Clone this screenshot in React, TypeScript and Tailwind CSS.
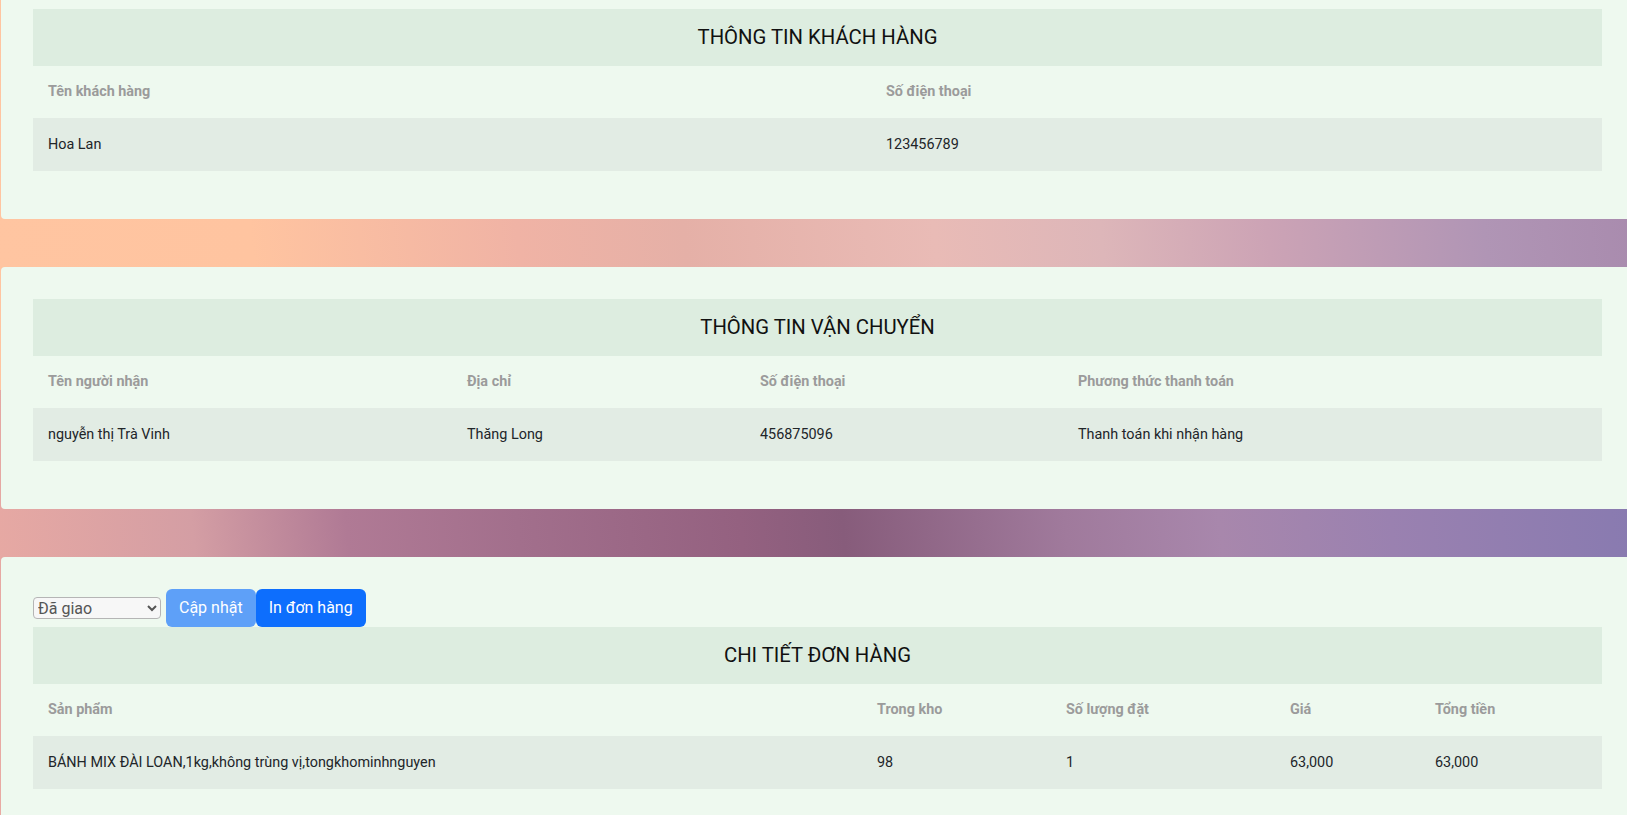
import React from 'react'

type Col = { label: string; w: string }

const customerCols: Col[] = [
    { label: 'Tên khách hàng', w: 'w-[838px]' },
    { label: 'Số điện thoại', w: 'w-[731px]' },
]

const shippingCols: Col[] = [
    { label: 'Tên người nhận', w: 'w-[419px]' },
    { label: 'Địa chỉ', w: 'w-[293px]' },
    { label: 'Số điện thoại', w: 'w-[318px]' },
    { label: 'Phương thức thanh toán', w: 'w-[539px]' },
]

const orderCols: Col[] = [
    { label: 'Sản phẩm', w: 'w-[829px]' },
    { label: 'Trong kho', w: 'w-[189px]' },
    { label: 'Số lượng đặt', w: 'w-[224px]' },
    { label: 'Giá', w: 'w-[145px]' },
    { label: 'Tổng tiền', w: 'w-[182px]' },
]

function InfoTable({ title, cols, row }: { title: string; cols: Col[]; row: string[] }) {
    return (
        <table className="w-full table-fixed border-collapse mb-4">
            <colgroup>
                {cols.map((c) => (
                    <col key={c.label} className={c.w} />
                ))}
            </colgroup>
            <thead>
                <tr>
                    <th
                        colSpan={cols.length}
                        className="h-[57px] pb-px bg-[#ddede0] text-center text-[20.3px] font-normal text-[#111]"
                    >
                        {title}
                    </th>
                </tr>
                <tr>
                    {cols.map((c) => (
                        <th
                            key={c.label}
                            className="h-[52px] px-[15px] text-left text-[14.4px] font-bold text-[#9b9b9b]"
                        >
                            {c.label}
                        </th>
                    ))}
                </tr>
            </thead>
            <tbody>
                <tr className="bg-[#e2ece4]">
                    {row.map((v, i) => (
                        <td key={i} className="h-[53px] px-[15px] text-[14.4px] text-[#212529]">
                            {v}
                        </td>
                    ))}
                </tr>
            </tbody>
        </table>
    )
}

function Card({ children }: { children: React.ReactNode }) {
    return (
        <section className="w-[1633px] shrink-0 rounded bg-[#eef9ef] px-8 pt-8 pb-8">
            {children}
        </section>
    )
}

export default function App() {
    return (
        <div className="h-screen overflow-hidden font-['Roboto',sans-serif] bg-no-repeat bg-[linear-gradient(84deg,#ffc5a1_0%,#ffc4a0_16%,#f0b3a5_32%,#e5b0a7_42%,#e9bbb6_57%,#ddb6b9_67%,#cca3b5_77%,#b095b5_90%,#a88aad_100%),linear-gradient(84deg,#e9aaa3_0%,#d49ea4_13%,#b07a95_22%,#a26f8c_32%,#946180_45%,#875c7b_51%,#a07a9c_64%,#a887ac_73%,#9a81b0_83%,#8579b0_100%)] bg-[length:100%_390px,100%_100%]">
            <div className="-mt-[23px] pl-px flex flex-col gap-12">
                {/* Customer */}
                <Card>
                    <InfoTable title="THÔNG TIN KHÁCH HÀNG" cols={customerCols} row={['Hoa Lan', '123456789']} />
                </Card>

                {/* Shipping */}
                <Card>
                    <InfoTable
                        title="THÔNG TIN VẬN CHUYỂN"
                        cols={shippingCols}
                        row={['nguyễn thị Trà Vinh', 'Thăng Long', '456875096', 'Thanh toán khi nhận hàng']}
                    />
                </Card>

                {/* Order detail */}
                <Card>
                    <div className="flex items-center">
                        <select
                            defaultValue="delivered"
                            className="w-[128px] h-[22px] border border-[#b5b5b5] rounded-sm bg-[#f7f7f7] text-base text-[#555] font-['Roboto',sans-serif]"
                        >
                            <option value="pending">Chờ xác nhận</option>
                            <option value="shipping">Đang giao</option>
                            <option value="delivered">Đã giao</option>
                        </select>
                        <button className="ml-[5px] h-[38px] px-[13px] rounded-md bg-[#5ea0f8] text-base text-white">
                            Cập nhật
                        </button>
                        <button className="h-[38px] px-[13px] rounded-md bg-[#0d6efd] text-base text-white">
                            In đơn hàng
                        </button>
                    </div>
                    <InfoTable
                        title="CHI TIẾT ĐƠN HÀNG"
                        cols={orderCols}
                        row={['BÁNH MIX ĐÀI LOAN,1kg,không trùng vị,tongkhominhnguyen', '98', '1', '63,000', '63,000']}
                    />
                </Card>
            </div>
        </div>
    )
}
